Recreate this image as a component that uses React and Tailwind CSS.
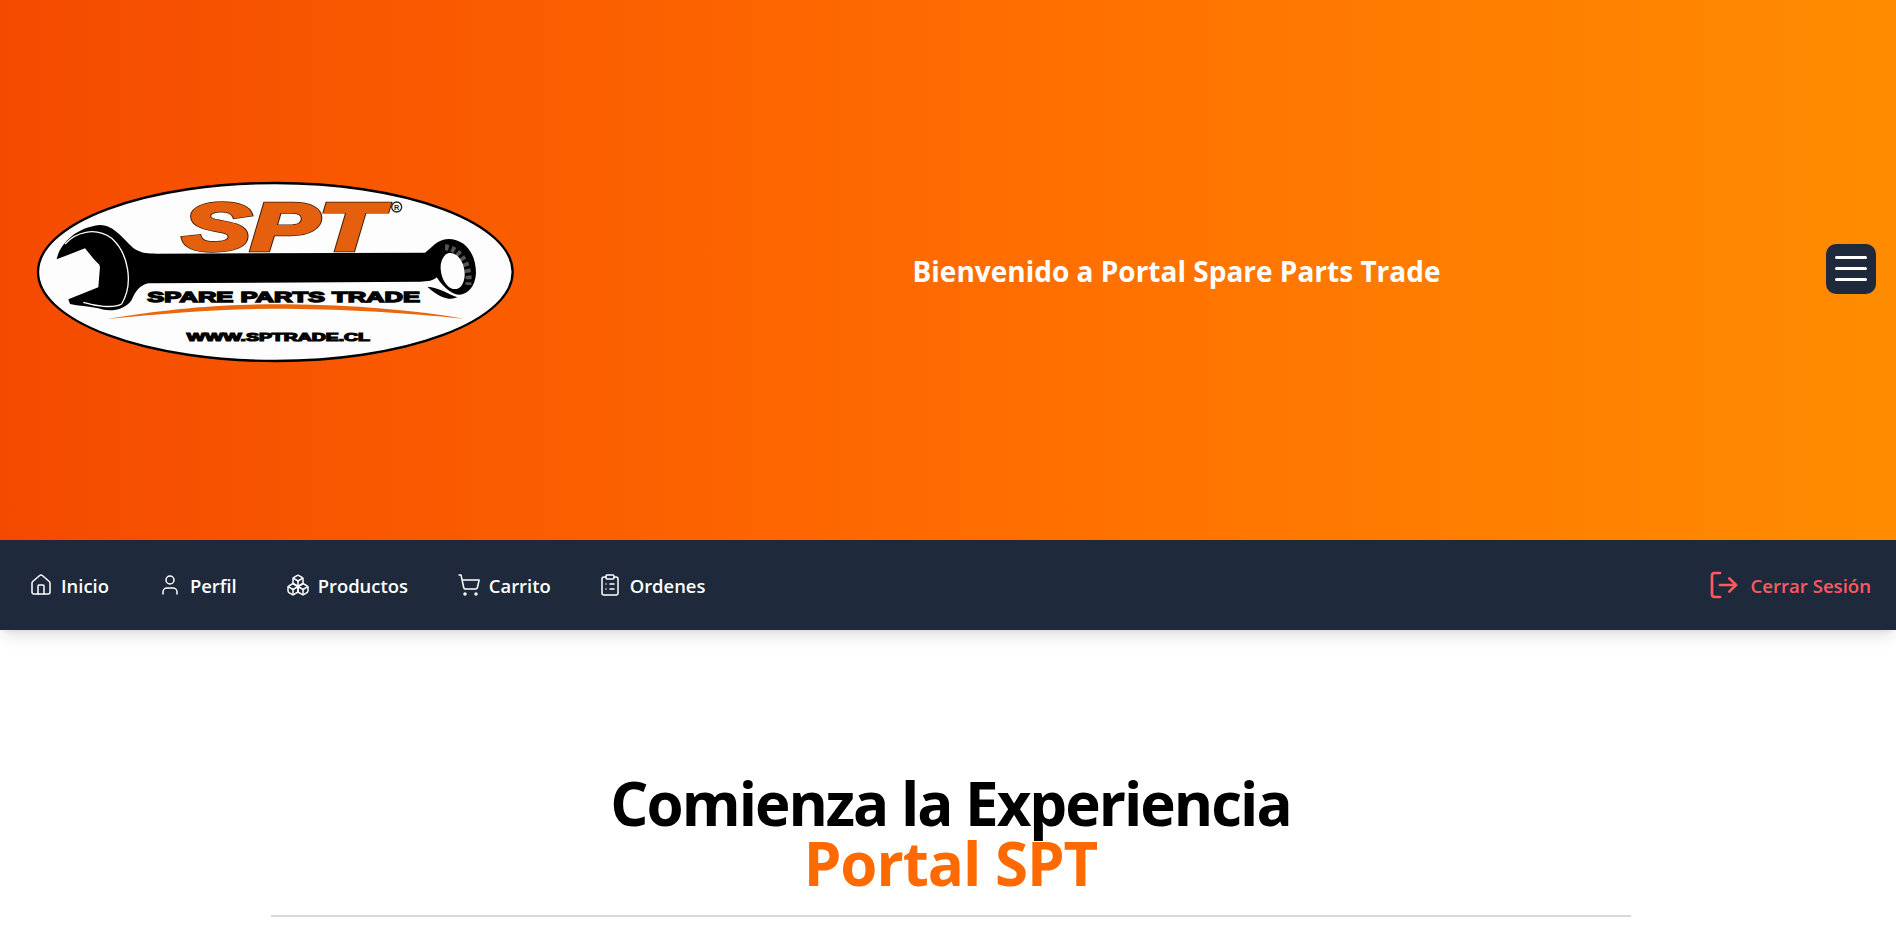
import React from 'react';
import { House, User, Boxes, ShoppingCart, ClipboardList, LogOut } from 'lucide-react';

const navItems = [
  { label: 'Inicio', icon: House, className: 'ml-[29px]' },
  { label: 'Perfil', icon: User, className: 'ml-[49px]' },
  { label: 'Productos', icon: Boxes, className: 'ml-[49px]' },
  { label: 'Carrito', icon: ShoppingCart, className: 'ml-[49px]' },
  { label: 'Ordenes', icon: ClipboardList, className: 'ml-[47px]' },
];

const logoFont = "'Liberation Sans', sans-serif";

function Logo() {
  return (
    <svg viewBox="0 0 1530 600" className="w-[510px] h-[200px] shrink-0">
      <ellipse cx="766" cy="306" rx="712" ry="267" fill="#fdfdfd" stroke="#000" strokeWidth="7" />
      {/* wrench */}
      <path
        d="M110 268 C118 225 165 172 240 165 C285 165 315 215 345 238 C365 250 385 251 410 251 L1215 248 C1235 235 1250 208 1285 207 C1335 207 1368 250 1368 310 C1366 355 1335 382 1305 372 C1280 362 1262 340 1250 322 C1240 332 1225 335 1200 335 L385 340 C360 345 345 365 335 390 C315 420 270 428 235 415 C205 408 175 408 150 402 L145 388 L235 352 L240 290 L195 235 Z"
        fill="#000"
      />
      <path d="M135 222 C165 188 225 168 275 205 C325 250 342 340 305 402 C280 416 225 408 190 397" fill="none" stroke="#fff" strokeWidth="4" />
      <path d="M198 248 L238 287" stroke="#fff" strokeWidth="4" />
      <path d="M1275 232 C1320 235 1352 285 1345 345" fill="none" stroke="#555" strokeWidth="18" strokeDasharray="11 9" />
      <ellipse cx="1298" cy="303" rx="35" ry="55" transform="rotate(-12 1298 303)" fill="#fdfdfd" />
      <path d="M1222 350 C1255 352 1285 372 1312 382 C1290 392 1260 385 1222 350 Z" fill="#000" />
      {/* swoosh */}
      <path d="M258 448 C480 410 650 402 800 403 C1000 405 1180 420 1332 446 C1150 428 1000 418 800 416 C620 416 450 428 258 448 Z" fill="#e8670f" />
      {/* logo lettering */}
      <text x="488" y="240" textLength="596" lengthAdjust="spacingAndGlyphs" fontFamily={logoFont} fontWeight="700" fontStyle="italic" fontSize="200" fill="#3a1a05" stroke="#3a1a05" strokeWidth="13">
        SPT
      </text>
      <text x="488" y="240" textLength="596" lengthAdjust="spacingAndGlyphs" fontFamily={logoFont} fontWeight="700" fontStyle="italic" fontSize="200" fill="#e4600f" stroke="#e4600f" strokeWidth="9">
        SPT
      </text>
      <circle cx="1130" cy="111" r="15" fill="none" stroke="#222" strokeWidth="4" />
      <text x="1122" y="119" fontFamily={logoFont} fontWeight="700" fontSize="22" fill="#222">
        R
      </text>
      <text x="382" y="395" textLength="818" lengthAdjust="spacingAndGlyphs" fontFamily={logoFont} fontWeight="700" fontSize="45" fill="#000" stroke="#000" strokeWidth="4">
        SPARE PARTS TRADE
      </text>
      <text x="500" y="513" textLength="550" lengthAdjust="spacingAndGlyphs" fontFamily={logoFont} fontWeight="700" fontSize="34" fill="#000" stroke="#000" strokeWidth="3.5">
        WWW.SPTRADE.CL
      </text>
    </svg>
  );
}

export default function App() {
  return (
    <div className="bg-white font-['Open_Sans',sans-serif]">
      {/* Header */}
      <header className="h-[540px] flex items-center bg-gradient-to-r from-[#f44a00] via-[#ff6b00] to-[#ff8c00] pl-[20px] pr-[20px]">
        <Logo />
        <h1 className="flex-1 text-center text-[28px] font-bold text-white mt-[2px] pr-[3px]">
          Bienvenido a Portal Spare Parts Trade
        </h1>
        <button className="w-[50px] h-[50px] mb-[3px] rounded-[10px] bg-[#1e293b] flex flex-col items-center justify-center gap-[8px]">
          <span className="w-[32px] h-[3px] rounded-full bg-white" />
          <span className="w-[32px] h-[3px] rounded-full bg-white" />
          <span className="w-[32px] h-[3px] rounded-full bg-white" />
        </button>
      </header>

      {/* Nav */}
      <nav className="relative h-[90px] bg-[#1e293b] shadow-lg flex items-center justify-between pr-[25px]">
        <div className="flex items-center">
          {navItems.map((item) => {
            const Icon = item.icon;
            return (
              <a key={item.label} className={`flex items-center gap-[8px] text-white text-[18.4px] font-semibold ${item.className}`}>
                <Icon size={24} strokeWidth={1.5} />
                <span className="mt-[1px]">{item.label}</span>
              </a>
            );
          })}
        </div>
        <a className="flex items-center gap-[10px] text-[#ff5a5f] text-[18.6px] font-semibold">
          <LogOut size={32} strokeWidth={2} />
          <span className="mt-[1px]">Cerrar Sesión</span>
        </a>
      </nav>

      {/* Title */}
      <section className="pt-[143px] pl-[5px] flex flex-col items-center">
        <h2 className="text-[60px] leading-[60px] font-bold text-black text-center tracking-[-2px]">
          Comienza la Experiencia
          <br />
          <span className="text-[#ff6a00] tracking-[-1px]">Portal SPT</span>
        </h2>
        <div className="mt-[22px] w-[1360px] h-[2px] bg-[#d6d8e2]" />
      </section>
    </div>
  );
}
